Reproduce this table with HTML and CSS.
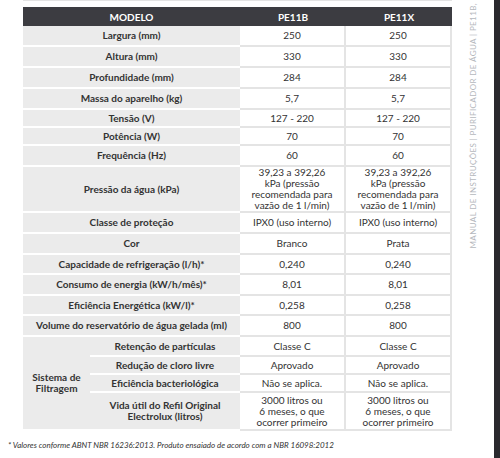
FILE: index.html
```html
<!DOCTYPE html>
<html lang="pt-BR">

<head>
  <meta charset="UTF-8">
  <meta name="viewport" content="width=device-width, initial-scale=1.0">
  <title>Especificações técnicas PE11B / PE11X</title>
  <link rel="stylesheet" href="styles.css">
</head>

<body>
  <div class="page">
    <div class="sheet">
      <div class="top-rule"></div>

      <table class="specs">
        <colgroup>
          <col class="col-group">
          <col class="col-label">
          <col class="col-value">
          <col class="col-value">
        </colgroup>
        <thead>
          <tr>
            <th colspan="2">MODELO</th>
            <th>PE11B</th>
            <th>PE11X</th>
          </tr>
        </thead>
        <tbody>
          <tr>
            <td class="label" colspan="2">Largura (mm)</td>
            <td class="value">250</td>
            <td class="value">250</td>
          </tr>
          <tr>
            <td class="label" colspan="2">Altura (mm)</td>
            <td class="value">330</td>
            <td class="value">330</td>
          </tr>
          <tr>
            <td class="label" colspan="2">Profundidade (mm)</td>
            <td class="value">284</td>
            <td class="value">284</td>
          </tr>
          <tr>
            <td class="label" colspan="2">Massa do aparelho (kg)</td>
            <td class="value">5,7</td>
            <td class="value">5,7</td>
          </tr>
          <tr class="tight">
            <td class="label" colspan="2">Tensão (V)</td>
            <td class="value">127 - 220</td>
            <td class="value">127 - 220</td>
          </tr>
          <tr class="tight">
            <td class="label" colspan="2">Potência (W)</td>
            <td class="value">70</td>
            <td class="value">70</td>
          </tr>
          <tr>
            <td class="label" colspan="2">Frequência (Hz)</td>
            <td class="value">60</td>
            <td class="value">60</td>
          </tr>
          <tr class="tall">
            <td class="label" colspan="2">Pressão da água (kPa)</td>
            <td class="value">39,23 a 392,26<br>kPa (pressão<br>recomendada para<br>vazão de 1 l/min)</td>
            <td class="value">39,23 a 392,26<br>kPa (pressão<br>recomendada para<br>vazão de 1 l/min)</td>
          </tr>
          <tr>
            <td class="label" colspan="2">Classe de proteção</td>
            <td class="value">IPX0 (uso interno)</td>
            <td class="value">IPX0 (uso interno)</td>
          </tr>
          <tr>
            <td class="label" colspan="2">Cor</td>
            <td class="value">Branco</td>
            <td class="value">Prata</td>
          </tr>
          <tr class="mid">
            <td class="label" colspan="2">Capacidade de refrigeração (l/h)*</td>
            <td class="value">0,240</td>
            <td class="value">0,240</td>
          </tr>
          <tr>
            <td class="label" colspan="2">Consumo de energia (kW/h/mês)*</td>
            <td class="value">8,01</td>
            <td class="value">8,01</td>
          </tr>
          <tr class="mid">
            <td class="label" colspan="2">Eficiência Energética (kW/l)*</td>
            <td class="value">0,258</td>
            <td class="value">0,258</td>
          </tr>
          <tr>
            <td class="label" colspan="2">Volume do reservatório de água gelada (ml)</td>
            <td class="value">800</td>
            <td class="value">800</td>
          </tr>
          <tr class="mid">
            <td class="label group" rowspan="4">Sistema de<br>Filtragem</td>
            <td class="label">Retenção de partículas</td>
            <td class="value">Classe C</td>
            <td class="value">Classe C</td>
          </tr>
          <tr class="tight">
            <td class="label">Redução de cloro livre</td>
            <td class="value">Aprovado</td>
            <td class="value">Aprovado</td>
          </tr>
          <tr class="tight">
            <td class="label">Eficiência bacteriológica</td>
            <td class="value">Não se aplica.</td>
            <td class="value">Não se aplica.</td>
          </tr>
          <tr class="double">
            <td class="label">Vida útil do Refil Original<br>Electrolux (litros)</td>
            <td class="value">3000 litros ou<br>6 meses, o que<br>ocorrer primeiro</td>
            <td class="value">3000 litros ou<br>6 meses, o que<br>ocorrer primeiro</td>
          </tr>
        </tbody>
      </table>

      <p class="footnote">* Valores conforme ABNT NBR 16236:2013. Produto ensaiado de acordo com a NBR 16098:2012</p>
    </div>

    <div class="side">
      <span class="side-text">MANUAL DE INSTRUÇÕES | PURIFICADOR DE ÁGUA | PE11B,</span>
    </div>

    <div class="edge"></div>
  </div>
</body>

</html>
```

FILE: styles.css
```css
* {
  box-sizing: border-box;
}

body {
  margin: 0;
  background: #fff;
  font-family: Lato, "Open Sans", sans-serif;
  color: #333;
}

.page {
  display: flex;
  height: 458px;
  overflow: hidden;
}

.sheet {
  width: 452px;
  padding-left: 8px;
}

.top-rule {
  height: 1px;
  margin-left: 15px;
  margin-bottom: 6px;
  background: #e4e4e4;
}

/* Spec table */
.specs {
  width: 429px;
  margin-left: 15px;
  border-collapse: separate;
  border-spacing: 0;
  table-layout: fixed;
  font-size: 10px;
  text-align: center;
}

.col-group {
  width: 67px;
}

.col-label {
  width: 150px;
}

.col-value {
  width: 106px;
}

.specs th {
  height: 19px;
  padding: 0;
  background: #3c3c41;
  color: #fff;
  font-weight: 700;
  font-size: 10px;
}

.specs td {
  height: 21px;
  padding: 0 2px;
  vertical-align: middle;
}

.specs tr.tight td {
  height: 18px;
}

.specs tr.mid td {
  height: 20px;
}

.specs tr.tall td {
  height: 46px;
}

.specs tr.double td {
  height: 38px;
}

.label {
  background: #ebebeb;
  border-bottom: 2px solid #fff;
  font-weight: 700;
  line-height: 11px;
}

.label.group {
  height: auto;
}

.value {
  background: #fff;
  border-bottom: 2px solid #e4e4e4;
  border-right: 2px solid #e4e4e4;
  line-height: 11px;
}

.footnote {
  margin: 9px 0 0;
  font-size: 8px;
  font-style: italic;
}

/* Running header on the page margin */
.side {
  width: 42px;
  height: 248px;
  display: flex;
  flex-direction: column;
  justify-content: flex-end;
  align-items: center;
}

.side-text {
  writing-mode: vertical-rl;
  transform: rotate(180deg);
  white-space: nowrap;
  font-size: 8px;
  letter-spacing: 0.4px;
  color: #b5b8bd;
}

.edge {
  width: 6px;
  background: #2a292e;
}
```
